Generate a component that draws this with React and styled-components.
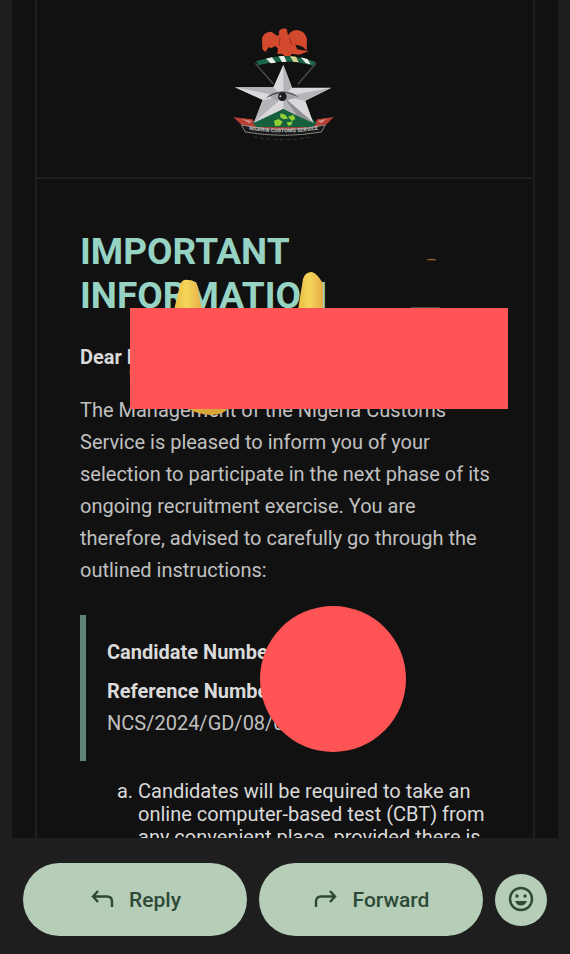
import styled, { createGlobalStyle, css } from "styled-components";

const GlobalStyle = createGlobalStyle`
  * {
    box-sizing: border-box;
  }

  body {
    margin: 0;
    background-color: #1e1e1e;
    font-family: Roboto, "Liberation Sans", sans-serif;
  }
`;

const Screen = styled.div`
  display: flex;
  flex-direction: column;
  height: 100vh;
`;

const Message = styled.main`
  position: relative;
  flex: 1;
  min-height: 0;
  margin: 0 12px;
  padding: 0 23px;
  overflow: hidden;
  background-color: #111;
`;

const Letter = styled.article`
  border: solid #1f1f1f;
  border-width: 0 2px;
`;

const LetterHead = styled.header`
  display: flex;
  justify-content: center;
  padding: 10px 0 27px;
  border-bottom: solid #1f1f1f 2px;
`;

const LetterBody = styled.div`
  padding: 51px 43px 0;
  color: #c0c0c0;
  font-size: 20px;
  line-height: 32px;
`;

const Title = styled.h1`
  margin: 0 0 23px;
  color: #96d3c3;
  font-size: 37px;
  font-weight: 700;
  line-height: 44px;
`;

const Paragraph = styled.p`
  margin: 0 0 21px;

  ${props => props.$strong && css`
    color: #dadada;
    font-weight: 700;
  `}
`;

const Details = styled.dl`
  display: flex;
  flex-direction: column;
  gap: 7px;
  margin: 29px 0 19px;
  padding: 21px 21px 22px;
  border-left: solid #5f8679 6px;

  dt {
    color: #dadada;
    font-weight: 700;
  }

  dd {
    margin: 0;
  }
`;

const Steps = styled.ol`
  margin: 0;
  padding-left: 58px;
  color: #dadada;
  line-height: 23px;
`;

const Actions = styled.footer`
  display: flex;
  align-items: center;
  gap: 12px;
  padding: 25px 23px 18px;
`;

const Button = styled.button`
  display: flex;
  flex: 1;
  align-items: center;
  justify-content: center;
  gap: 14px;
  height: 73px;
  padding: 0;
  border: 0;
  border-radius: 37px;
  background-color: #b6cdb8;
  color: #2d4a37;
  font: 500 21px/32px Roboto, "Liberation Sans", sans-serif;

  ${props => props.$round && css`
    flex: none;
    width: 52px;
    height: 52px;
  `}
`;

/* Markup drawn over the letter */
const Redaction = styled.div`
  position: absolute;
  background-color: #ff5456;
  top: ${props => props.$top}px;
  left: ${props => props.$left}px;
  width: ${props => props.$width}px;
  height: ${props => props.$height}px;
  border-radius: ${props => (props.$circle ? "50%" : "0")};
`;

const Stickers = styled.svg`
  position: absolute;
  top: 250px;
  left: 108px;
`;

function Emblem() {
  return (
    <svg width="150" height="140" viewBox="0 0 450 420" role="img" aria-label="Nigeria Customs Service">
      <path d="M136 160 L190 222 M318 160 L264 222" stroke="#4b5350" strokeWidth="4" fill="none" />
      <path
        d="M206 66 Q214 52 230 57 L234 76 Q244 60 262 60 Q286 64 291 86 L290 122 L280 112 L272 108 L264 106 L256 104 L262 118 L296 124 L268 134 L246 131 L240 138 L224 138 L216 131 L202 132 L204 116 L196 108 L184 114 L176 112 L166 126 L157 118 L156 84 Q164 64 184 65 L202 78 L208 72 Z"
        fill="#d2492d"
      />
      <path d="M210 82 L208 108 M238 82 L246 106" stroke="#99331f" strokeWidth="3" />
      <path d="M138 154 Q226 122 318 156 L308 167 Q226 142 146 166 Z" fill="#1d6548" />
      <path d="M168 146 L186 142 L198 158 L182 160 Z M206 139 L222 138 L230 155 L216 156 Z M272 142 L292 147 L302 163 L288 160 Z" fill="#eef2ec" />
      <path d="M240 138 L258 140 L266 157 L250 155 Z" fill="#d8d391" />
      <path d="M70 322 L128 328 L140 348 L310 348 L322 328 L371 321 L350 343 L326 358 L120 358 L94 344 Z" fill="#b63e35" />
      <path d="M94 326 L126 333 L118 340 Z M350 326 L322 333 L334 340 Z" fill="#d58b81" />
      <path d="M128 338 Q160 304 220 302 Q284 302 320 338 L308 352 L140 352 Z" fill="#17603e" />
      <path d="M220 164 L246 233 L364 233 L286 272 L310 338 L220 297 L132 338 L158 270 L74 232 L190 232 Z" fill="#d9d9dc" />
      <path d="M220 164 L246 233 L220 260 Z M364 233 L286 272 L220 260 Z M310 338 L220 297 L220 260 Z M132 338 L158 270 L220 260 Z M74 232 L190 232 L220 260 Z" fill="#b5b5b9" />
      <path d="M220 260 L310 338 L262 316 Z" fill="#8d8d92" />
      <path d="M220 297 L232 303 Q250 310 256 326 L244 346 L196 346 L186 330 Q194 310 220 297 Z" fill="#17603e" />
      <path d="M212 310 l14 4 l8 12 l-14 2 l-10 -8 Z M192 332 l14 -5 l12 8 l-8 12 l-15 1 Z M234 320 l16 -6 l6 12 l-10 8 Z M230 337 l18 -2 l-4 10 l-10 2 Z" fill="#91ce35" />
      <path d="M168 264 Q184 246 218 244 Q250 246 266 262 Q236 250 218 250 Q194 252 168 264 Z" fill="#55555a" />
      <path d="M180 262 Q216 282 258 262 Q218 236 180 262 Z" fill="#a4a4a8" />
      <circle cx="217" cy="260" r="13" fill="#1c1d21" />
      <circle cx="211" cy="259" r="3" fill="#c9c9c9" />
      <path d="M94 345 Q220 374 346 345 L334 366 Q220 386 106 366 Z" fill="#191919" stroke="#858585" strokeWidth="3" />
      <path id="motto" d="M110 358 Q220 376 332 358" fill="none" />
      <text fill="#c4c4c4" fontSize="16" fontWeight="700">
        <textPath href="#motto" startOffset="50%" textAnchor="middle">NIGERIA CUSTOMS SERVICE</textPath>
      </text>
      <path d="M130 380 Q220 398 310 380" stroke="#2a2a2a" strokeWidth="4" strokeDasharray="12 8" fill="none" />
    </svg>
  );
}

function HandStickers() {
  return (
    <Stickers width="330" height="180" viewBox="120 250 330 180" aria-hidden="true">
      <defs>
        <linearGradient id="skin" x1="0" x2="1">
          <stop offset="0" stopColor="#e9bd43" />
          <stop offset="0.45" stopColor="#f5d65a" />
          <stop offset="1" stopColor="#e6ae48" />
        </linearGradient>
      </defs>
      <path d="M174 310 L180 285 Q182 279 188 280 Q195 280 197 285 L202 310 Z" fill="url(#skin)" />
      <path d="M298 310 L303 279 Q305 272 312 272 Q318 274 323 284 L323 310 Z" fill="url(#skin)" />
      <path d="M187 408 Q198 415 212 415 Q225 414 228 408 Z" fill="#dba73b" />
      <path d="M131 362 Q128 372 131 382 Z" fill="#7d5b23" />
      <path d="M427 260 Q432 258 436 260 Z" fill="#a9672b" stroke="#a9672b" strokeWidth="0.5" />
      <path d="M411 308 H440" stroke="#8c7a68" strokeWidth="1" />
    </Stickers>
  );
}

function ReplyIcon() {
  return (
    <svg width="26" height="26" viewBox="0 0 26 26" fill="none" stroke="currentColor" strokeWidth="2.4" aria-hidden="true">
      <path d="M9 4 L4 9.500 L9 15 M4 9.500 H18 Q23 9.500 23 14.500 V20" />
    </svg>
  );
}

function ForwardIcon() {
  return (
    <svg width="26" height="26" viewBox="0 0 26 26" fill="none" stroke="currentColor" strokeWidth="2.4" aria-hidden="true">
      <path d="M17 4 L22 9.500 L17 15 M22 9.500 H8 Q3 9.500 3 14.500 V20" />
    </svg>
  );
}

function SmileIcon() {
  return (
    <svg width="28" height="28" viewBox="0 0 28 28" fill="currentColor" aria-hidden="true">
      <circle cx="14" cy="13" r="11" fill="none" stroke="currentColor" strokeWidth="2.4" />
      <circle cx="10" cy="10" r="1.7" />
      <circle cx="18" cy="10" r="1.7" />
      <path d="M8 15 H20 Q18 19.500 14 19.500 Q10 19.500 8 15 Z" />
    </svg>
  );
}

export default function App() {
  return (
    <>
      <GlobalStyle />
      <Screen>
        <Message>
          <Letter>
            <LetterHead>
              <Emblem />
            </LetterHead>
            <LetterBody>
              <Title>
                IMPORTANT
                <br />
                INFORMATION
              </Title>
              <Paragraph $strong>Dear N</Paragraph>
              <Paragraph>
                The Management of the Nigeria Customs Service is pleased to
                inform you of your selection to participate in the next phase of
                its ongoing recruitment exercise. You are therefore, advised to
                carefully go through the outlined instructions:
              </Paragraph>
              <Details>
                <div>
                  <dt>Candidate Number</dt>
                </div>
                <div>
                  <dt>Reference Number</dt>
                  <dd>NCS/2024/GD/08/0</dd>
                </div>
              </Details>
              <Steps type="a">
                <li>
                  Candidates will be required to take an online computer-based
                  test (CBT) from any convenient place, provided there is
                </li>
              </Steps>
            </LetterBody>
          </Letter>
          <HandStickers />
          <Redaction $top={308} $left={118} $width={378} $height={101} />
          <Redaction $top={606} $left={248} $width={146} $height={146} $circle />
        </Message>
        <Actions>
          <Button type="button">
            <ReplyIcon />
            Reply
          </Button>
          <Button type="button">
            <ForwardIcon />
            Forward
          </Button>
          <Button type="button" $round aria-label="Add emoji reaction">
            <SmileIcon />
          </Button>
        </Actions>
      </Screen>
    </>
  );
}
